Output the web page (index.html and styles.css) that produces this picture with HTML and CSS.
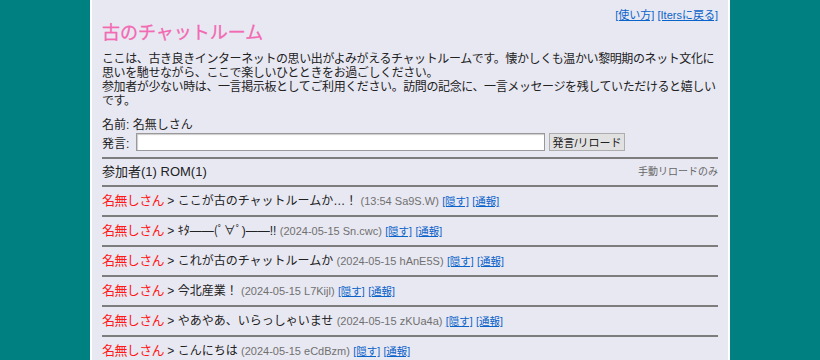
FILE: index.html
```html
<!DOCTYPE html>
<html lang="ja">
<head>
    <meta charset="UTF-8">
    <meta name="viewport" content="width=device-width, initial-scale=1.0">
    <title>古のチャットルーム</title>
    <link rel="stylesheet" href="styles.css">
</head>
<body>

    <div class="container">
        <div class="top-links">
            <a href="#">[使い方]</a> <a href="#">[Itersに戻る]</a>
        </div>

        <h1>古のチャットルーム</h1>

        <p class="intro">
            ここは、古き良きインターネットの思い出がよみがえるチャットルームです。懐かしくも温かい黎明期のネット文化に思いを馳せながら、ここで楽しいひとときをお過ごしください。<br>
            参加者が少ない時は、一言掲示板としてご利用ください。訪問の記念に、一言メッセージを残していただけると嬉しいです。
        </p>

        <form class="post-form">
            <div class="name-row">名前: 名無しさん</div>
            <div class="say-row">
                <label for="msg">発言:</label>
                <input type="text" id="msg" class="msg-input">
                <button type="button" class="send-button">発言/リロード</button>
            </div>
        </form>

        <div class="status">
            <span class="members">参加者(1) ROM(1)</span>
            <span class="reload-mode">手動リロードのみ</span>
        </div>

        <div class="log">
            <div class="msg">
                <span class="name">名無しさん</span> &gt; ここが古のチャットルームか…！
                <span class="meta">(13:54 Sa9S.W)</span>
                <a href="#">[隠す]</a> <a href="#">[通報]</a>
            </div>
            <div class="msg">
                <span class="name">名無しさん</span> &gt; ｷﾀ――(ﾟ∀ﾟ)――!!
                <span class="meta">(2024-05-15 Sn.cwc)</span>
                <a href="#">[隠す]</a> <a href="#">[通報]</a>
            </div>
            <div class="msg">
                <span class="name">名無しさん</span> &gt; これが古のチャットルームか
                <span class="meta">(2024-05-15 hAnE5S)</span>
                <a href="#">[隠す]</a> <a href="#">[通報]</a>
            </div>
            <div class="msg">
                <span class="name">名無しさん</span> &gt; 今北産業！
                <span class="meta">(2024-05-15 L7Kijl)</span>
                <a href="#">[隠す]</a> <a href="#">[通報]</a>
            </div>
            <div class="msg">
                <span class="name">名無しさん</span> &gt; やあやあ、いらっしゃいませ
                <span class="meta">(2024-05-15 zKUa4a)</span>
                <a href="#">[隠す]</a> <a href="#">[通報]</a>
            </div>
            <div class="msg">
                <span class="name">名無しさん</span> &gt; こんにちは
                <span class="meta">(2024-05-15 eCdBzm)</span>
                <a href="#">[隠す]</a> <a href="#">[通報]</a>
            </div>
        </div>
    </div>

</body>
</html>
```

FILE: styles.css
```css
body {
    margin: 0;
    background-color: #008080;
    font-family: 'Liberation Sans', 'Noto Sans CJK JP', sans-serif;
    color: #222;
}

a {
    color: #0a63c9;
}

.container {
    width: 616px;
    margin: 0 auto;
    padding: 8px 10px 0;
    background-color: #e8e8f2;
    border-left: 2px solid #fff;
    border-right: 2px solid #fff;
    min-height: 400px;
}

.top-links {
    text-align: right;
    font-size: 11px;
    line-height: 14px;
}

h1 {
    margin: 0;
    font-size: 18px;
    line-height: 22px;
    font-weight: normal;
    color: #f26ab2;
    -webkit-text-stroke: 0.3px #f26ab2;
}

.intro {
    margin: 8px 0 0;
    font-size: 12px;
    line-height: 14px;
    letter-spacing: -0.4px;
}

.post-form {
    margin: 10px 0 0;
    font-size: 12px;
}

.name-row {
    line-height: 14px;
}

.say-row {
    display: flex;
    align-items: center;
    gap: 4px;
    height: 18px;
    margin-top: 1px;
}

.say-row label {
    width: 30px;
}

.msg-input {
    width: 401px;
    height: 12px;
    padding: 2px 3px;
    border: 1px solid #999;
    box-shadow: inset 1px 1px 1px #ccc;
    background-color: #fff;
}

.send-button {
    height: 18px;
    width: 76px;
    padding: 0;
    font-size: 11px;
    font-family: 'Liberation Sans', 'Noto Sans CJK JP', sans-serif;
    background-color: #e1e1e1;
    border: 1px solid #adadad;
    color: #222;
}

.status {
    display: flex;
    justify-content: space-between;
    align-items: center;
    height: 14px;
    margin-top: 6px;
    padding: 6px 0;
    border-top: 2px solid #7d7d7d;
    border-bottom: 2px solid #7d7d7d;
}

.members {
    font-size: 13px;
    line-height: 14px;
}

.reload-mode {
    font-size: 10px;
    line-height: 14px;
    color: #666;
}

.msg {
    height: 16px;
    padding: 6px 0;
    line-height: 16px;
    font-size: 12px;
    border-bottom: 2px solid #7d7d7d;
    white-space: nowrap;
}

.msg span,
.msg a {
    line-height: 1;
}

.msg .name {
    color: #ff1a1a;
    font-size: 13px;
    letter-spacing: -0.6px;
}

.msg .meta {
    font-size: 11px;
    color: #707070;
}

.msg a {
    font-size: 10.5px;
}
```
